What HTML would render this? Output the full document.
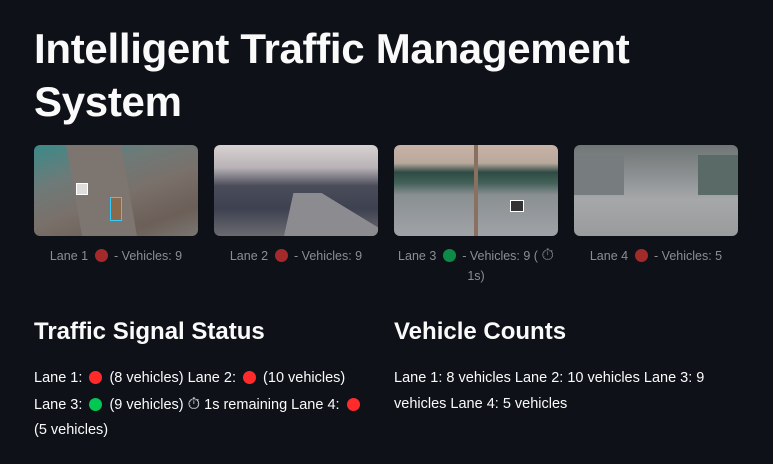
<!DOCTYPE html>
<html><head><style>
body{margin:0;background:#0e1117;color:#fafafa;font-family:"Liberation Sans",sans-serif;width:773px;height:464px;overflow:hidden;position:relative}
h1{position:absolute;left:34px;top:22px;margin:0;font-size:42px;line-height:53px;font-weight:bold;letter-spacing:-0.3px;width:700px}
.img{position:absolute;top:145px;width:164px;height:91px;border-radius:6px;overflow:hidden}
.cap{position:absolute;top:246px;width:164px;text-align:center;font-size:12.5px;line-height:20px;color:#8b8e95}
.d{display:inline-block;width:13px;height:13px;border-radius:50%;vertical-align:-2px;margin:0 3px}
h2{position:absolute;top:314px;margin:0;font-size:24px;font-weight:bold;line-height:36px}
.p{position:absolute;top:366px;font-size:14.5px;line-height:25.5px;width:345px}
.r{background:#ff2b2b}.g{background:#00c853}
.t{font-size:16px}
.box{position:absolute;border:1px solid #fff;width:8px;height:7px}
</style></head><body>
<h1>Intelligent Traffic Management System</h1>
<div class="img" style="left:34px;background:linear-gradient(160deg,#3a8a88 0%,#6e7a78 30%,#7a706a 55%,#6b5f58 80%,#7a7570 100%)">
<div style="position:absolute;left:40px;top:0;width:55px;height:91px;background:#7d756f;transform:skewX(10deg)"></div>
<div class="box" style="left:76px;top:52px;border-color:#3cf;width:10px;height:22px;background:#8a6a4a"></div>
<div class="box" style="left:42px;top:38px;width:10px;height:10px;background:#ddd"></div></div>
<div class="img" style="left:214px;background:linear-gradient(180deg,#d8d2d2 0%,#b8b2b6 25%,#4a4c5a 45%,#3e4150 70%,#6a6a70 100%)">
<div style="position:absolute;left:70px;top:48px;width:94px;height:43px;background:#8c8c90;clip-path:polygon(10% 0,40% 0,100% 80%,100% 100%,0 100%)"></div></div>
<div class="img" style="left:394px;background:linear-gradient(180deg,#c9b3a6 0%,#b8a89c 20%,#2e4a44 30%,#44625a 42%,#8a8f92 55%,#a0a3a6 100%)">
<div style="position:absolute;left:80px;top:0;width:4px;height:91px;background:#8a7060"></div>
<div class="box" style="left:116px;top:55px;width:12px;height:10px;background:#333"></div></div>
<div class="img" style="left:574px;background:linear-gradient(180deg,#6f7574 0%,#8a8d8f 30%,#a5a7a9 60%,#9a9b9c 100%)">
<div style="position:absolute;left:0;top:10px;width:50px;height:40px;background:#777c7e"></div>
<div style="position:absolute;right:0;top:10px;width:40px;height:40px;background:#5a6a66"></div></div>
<div class="cap" style="left:34px">Lane 1 <span class="d" style="background:#a32a2a"></span> - Vehicles: 9</div>
<div class="cap" style="left:214px">Lane 2 <span class="d" style="background:#a32a2a"></span> - Vehicles: 9</div>
<div class="cap" style="left:394px">Lane 3 <span class="d" style="background:#0d8a48"></span> - Vehicles: 9 ( <span class="t">⏱</span><br>1s)</div>
<div class="cap" style="left:574px">Lane 4 <span class="d" style="background:#a32a2a"></span> - Vehicles: 5</div>
<h2 style="left:34px">Traffic Signal Status</h2>
<h2 style="left:394px">Vehicle Counts</h2>
<div class="p" style="left:34px">Lane 1: <span class="d r"></span> (8 vehicles) Lane 2: <span class="d r"></span> (10 vehicles)<br>Lane 3: <span class="d g"></span> (9 vehicles) <span class="t">⏱</span> 1s remaining Lane 4: <span class="d r"></span><br>(5 vehicles)</div>
<div class="p" style="left:394px">Lane 1: 8 vehicles Lane 2: 10 vehicles Lane 3: 9<br>vehicles Lane 4: 5 vehicles</div>
</body></html>
